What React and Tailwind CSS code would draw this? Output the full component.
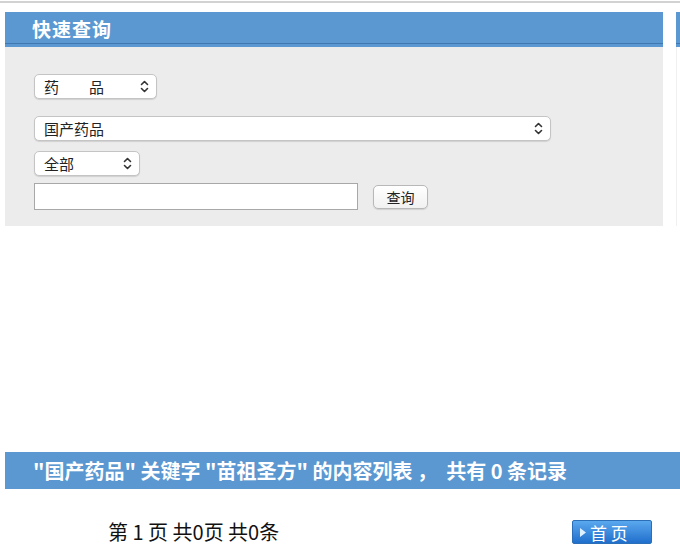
import React from 'react';

const cjk = { fontFamily: '"Noto Sans CJK SC", "Noto Sans", sans-serif' };

const UpDown = () => (
  <svg width="9" height="13" viewBox="0 0 9 13" fill="none" stroke="#333" strokeWidth="1.6" strokeLinecap="round" strokeLinejoin="round">
    <path d="M1.5 4.5 L4.5 1.5 L7.5 4.5" />
    <path d="M1.5 8.5 L4.5 11.5 L7.5 8.5" />
  </svg>
);

const FakeSelect = ({ label, width }) => (
  <div className={`${width} h-[25px] flex items-center justify-between pl-[9px] pr-[7px] bg-white rounded-[5px] border border-[#c4c4c4] shadow-[0_1px_1px_rgba(0,0,0,0.12)] text-[15px] text-[#222]`}>
    <span className="whitespace-pre leading-none">{label}</span>
    <UpDown />
  </div>
);

export default function App() {
  return (
    <div className="w-[680px] h-[546px] bg-white overflow-hidden" style={cjk}>
      {/* top rule */}
      <div className="h-[3px] border-b-2 border-[#d2d2d2]" />

      <div className="flex pt-[9px] pl-[5px] gap-[13px]">
        <div className="w-[658px] shrink-0">
          <div className="h-[35px] bg-[#5b97d0] shadow-[inset_0_-3px_0_#5b97d0,inset_0_-4px_0_#3f78b0] flex items-center pl-[27px]">
            <span className="text-white font-bold text-[19px] tracking-[1px]">快速查询</span>
          </div>
          <div className="h-[179px] bg-[#ececec] pl-[29px] pt-[27px] flex flex-col">
            <FakeSelect label={'药　　品'} width="w-[123px]" />
            <div className="mt-[17px]">
              <FakeSelect label="国产药品" width="w-[517px]" />
            </div>
            <div className="mt-[10px]">
              <FakeSelect label="全部" width="w-[106px]" />
            </div>
            <div className="mt-[7px] flex items-center gap-[15px]">
              <div className="w-[324px] h-[27px] bg-white border border-[#a8a8a8]" />
              <button className="w-[55px] h-[24px] rounded-[5px] border border-[#b8b8b8] bg-gradient-to-b from-white to-[#f1f1f1] shadow-[0_1px_1px_rgba(0,0,0,0.12)] text-[14px] text-[#222] leading-none">
                查询
              </button>
            </div>
          </div>
        </div>
        <div className="flex-1 flex flex-col">
          <div className="h-[35px] bg-[#5b97d0] shadow-[inset_0_-3px_0_#5b97d0,inset_0_-4px_0_#3f78b0]" />
          <div className="h-[179px] border-l border-[#f0f0f0]" />
        </div>
      </div>

      <div className="ml-[5px] mt-[226px] h-[37px] bg-[#5b97d0] flex items-center pl-[28px]">
        <span className="text-white font-bold text-[20px] whitespace-pre">"国产药品" 关键字 "苗祖圣方" 的内容列表 ，  共有 0 条记录</span>
      </div>

      <div className="flex items-center h-[26px] mt-[30px] pl-[108px] pr-[28px] justify-between">
        <span className="text-[20px] leading-[26px] text-[#111]">第 1 页 共0页 共0条</span>
        <div className="w-[80px] h-[24px] rounded-[2px] bg-gradient-to-b from-[#5aa8ee] to-[#1f6fcc] border border-[#2a6fb8] flex items-center pl-[7px] gap-[4px] text-white text-[17px] leading-none">
          <svg width="6" height="9" viewBox="0 0 6 9"><path d="M0 0 L6 4.5 L0 9 Z" fill="#dff0ff" /></svg>
          <span className="whitespace-pre">首 页</span>
        </div>
      </div>
    </div>
  );
}
